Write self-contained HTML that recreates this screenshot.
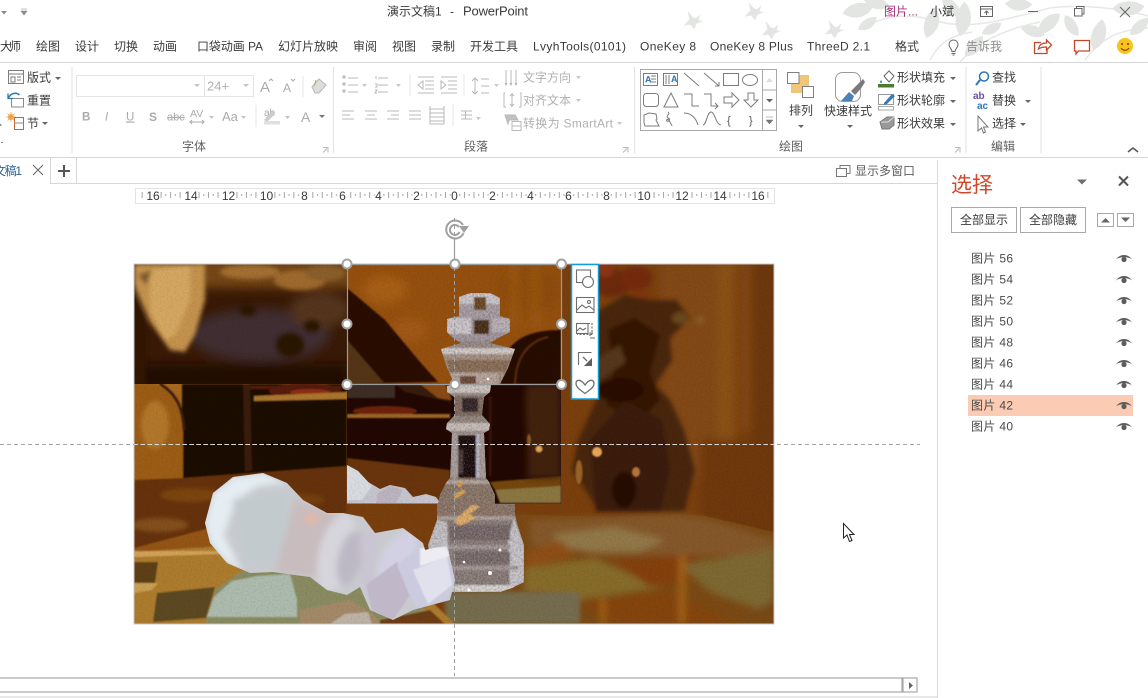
<!DOCTYPE html>
<html lang="zh"><head><meta charset="utf-8"><title>演示文稿1 - PowerPoint</title>
<style>
html,body{margin:0;padding:0;background:#fff;width:1148px;height:698px;overflow:hidden}
svg{display:block;position:absolute;left:0;top:0}
text{font-family:"Liberation Sans","Noto Sans CJK SC",sans-serif;font-size:12px;fill:#3a3a3a}
.d{fill:#b0b0b0}
.m{fill:#5e5e5e}
.l{fill:#4a4a4a;font-size:12px}
.ic{fill:none;stroke:#7c7c7c;stroke-width:1}
.dis{fill:none;stroke:#b8b8b8;stroke-width:1}
.leaf{fill:#e2e5e2}
.h{fill:#fff;stroke:#a2a2a2;stroke-width:2}
</style></head><body>
<svg width="1148" height="698" viewBox="0 0 1148 698" xmlns="http://www.w3.org/2000/svg">
<defs>
<filter id="b1" x="-20%" y="-20%" width="140%" height="140%"><feGaussianBlur stdDeviation=".8"/></filter>
<filter id="b2" x="-20%" y="-20%" width="140%" height="140%"><feGaussianBlur stdDeviation="2.2"/></filter>
<filter id="b3" x="-20%" y="-20%" width="140%" height="140%"><feGaussianBlur stdDeviation="3.5"/></filter>
<filter id="b5" x="-30%" y="-30%" width="160%" height="160%"><feGaussianBlur stdDeviation="5"/></filter>
<filter id="grain" x="0" y="0" width="100%" height="100%"><feTurbulence type="fractalNoise" baseFrequency=".55" numOctaves="2" seed="4"/><feColorMatrix type="matrix" values="0 0 0 0 0  0 0 0 0 0  0 0 0 0 0  1.6 0 0 0 -.62"/></filter>
<filter id="grainW" x="0" y="0" width="100%" height="100%"><feTurbulence type="fractalNoise" baseFrequency=".7" numOctaves="2" seed="9"/><feColorMatrix type="matrix" values="0 0 0 0 1  0 0 0 0 1  0 0 0 0 1  2.6 0 0 0 -1.2"/></filter>
<clipPath id="cp"><rect x="134" y="264" width="640" height="360"/></clipPath>
<clipPath id="ctl"><rect x="134" y="264" width="213" height="120"/></clipPath>
<clipPath id="ctm"><rect x="347" y="264" width="214" height="120"/></clipPath>
<clipPath id="cpt"><rect x="347" y="384" width="214" height="119.5"/></clipPath>
<clipPath id="cr"><rect x="561" y="264" width="213" height="360"/></clipPath>
<clipPath id="cb"><rect x="134" y="384" width="640" height="240"/></clipPath>
<clipPath id="gk"><path d="M459 297L470 293L490 293L500 298L500 316L510 319L510 332L498 338L490 343L515 349L508 368L500 384L491 385L490 392L484 397L482 415L490 424L489 430L484 433L486 478L489 482L495 495L495 504L515 504L515 515L519 530L524 545L524 582L512 588L500 592L445 592L432 570L428 545L437 520L437 504L438 504L440 495L446 483L450 478L452 433L446 429L447 423L455 415L454 397L447 392L447 386L454 384L446 365L441 349L461 343L452 337L447 332L447 319L459 316Z"/></clipPath>
<clipPath id="wkc"><path d="M205 523L213 493L233 477L263 473L287 483L303 500L327 513L343 513L363 517L375 533L403 528L423 543L425 550L447 545L455 580L450 600L413 610L393 620L370 610L360 587L347 595L327 590L310 577L273 572L250 573L227 563L210 543Z"/></clipPath>
<linearGradient id="am" x1="0" y1="0" x2="0" y2="1"><stop offset="0" stop-color="#a9691f"/><stop offset="1" stop-color="#8a4c10"/></linearGradient>
<pattern id="tick" x="454.5" y="192" width="9.48" height="7" patternUnits="userSpaceOnUse"><rect x="0" y="0" width="1" height="6" fill="#a4a4a4"/><rect x="4.74" y="2" width="1" height="2" fill="#a4a4a4"/></pattern>
<symbol id="eye" viewBox="0 0 16 10" overflow="visible"><path d="M0 6.500C4 .5 12 .5 16 6.500C12 3.400 4 3.400 0 6.500Z" fill="#5c5c5c"/><circle cx="8" cy="6.500" r="2.600" fill="#5c5c5c"/></symbol>
<symbol id="bird" viewBox="-12 -12 24 24" overflow="visible"><path d="M-10 5L-4 -2L-6 -11L0 -4L3 -3L8 -7L6 -1L11 0L4 3L1 9L-3 4Z"/></symbol>
<symbol id="lf" viewBox="-12 -12 24 24" overflow="visible"><path d="M-12 1C-7 -7 3 -9 12 -5C9 3 -2 8 -12 1Z"/></symbol>
</defs>

<rect width="1148" height="698" fill="#fff"/>

<!-- title bar decoration -->
<g class="leaf">
<path d="M862 30C885 12 915 14 940 22C975 30 1010 18 1050 8C1080 4 1120 8 1148 16" fill="none" stroke="#e6e8e6" stroke-width="1.500"/>
<path d="M960 62C975 45 1000 30 1040 22M1085 60C1100 40 1115 30 1148 28M930 60C940 42 950 36 972 32" fill="none" stroke="#e6e8e6" stroke-width="1.500"/>
<use href="#bird" x="682" y="10" width="22" height="22"/>
<use href="#bird" x="743" y="1" width="22" height="22"/>
<use href="#bird" x="760" y="20" width="22" height="22"/>
<use href="#bird" x="823" y="19" width="22" height="22"/>
<use href="#lf" transform="translate(858 12) scale(1.300)" width="24" height="24" x="-12" y="-12"/>
<use href="#lf" transform="translate(875 4) rotate(30) scale(1.100)" width="24" height="24" x="-12" y="-12"/>
<use href="#lf" transform="translate(868 25) rotate(-20) scale(.9)" width="24" height="24" x="-12" y="-12"/>
<use href="#lf" transform="translate(933 24) rotate(-60) scale(1.300)" width="24" height="24" x="-12" y="-12"/>
<use href="#lf" transform="translate(950 8) rotate(60) scale(1.100)" width="24" height="24" x="-12" y="-12"/>
<use href="#lf" transform="translate(965 20) rotate(-70) scale(1.400)" width="24" height="24" x="-12" y="-12"/>
<use href="#lf" transform="translate(975 48) rotate(-35) scale(1.100)" width="24" height="24" x="-12" y="-12"/>
<use href="#lf" transform="translate(992 30) rotate(-15) scale(.9)" width="24" height="24" x="-12" y="-12"/>
<use href="#lf" transform="translate(1018 6) rotate(15) scale(1.100)" width="24" height="24" x="-12" y="-12"/>
<use href="#lf" transform="translate(1034 30) rotate(-150) scale(1)" width="24" height="24" x="-12" y="-12"/>
<use href="#lf" transform="translate(1048 22) rotate(150) scale(1.200)" width="24" height="24" x="-12" y="-12"/>
<use href="#lf" transform="translate(1070 26) rotate(70) scale(1)" width="24" height="24" x="-12" y="-12"/>
<use href="#lf" transform="translate(1100 36) rotate(-60) scale(1.300)" width="24" height="24" x="-12" y="-12"/>
<use href="#lf" transform="translate(1128 10) rotate(10) scale(1.300)" width="24" height="24" x="-12" y="-12"/>
<use href="#lf" transform="translate(1140 28) rotate(-30) scale(1)" width="24" height="24" x="-12" y="-12"/>
</g>

<!-- QAT + title -->
<path d="M1 11h6l-3 3.500z" fill="#8a8a8a"/>
<path d="M21 9h6M21 11h6l-3 4z" fill="#8a8a8a" stroke="#8a8a8a" stroke-width=".6"/>
<text x="387" y="15.500">演示文稿1</text><text x="450" y="15.500">-</text><text x="463" y="15.500" style="font-size:13px" textLength="65">PowerPoint</text>
<text x="884" y="15.500" style="fill:#a6307c">图片...</text>
<text x="930" y="15.500">小斌</text>
<g fill="none" stroke="#666"><rect x="980.500" y="6.500" width="12" height="10"/><path d="M980.500 9h12M986.500 15v-4M984.500 13l2-2 2 2"/><path d="M1028 11.500h10"/><rect x="1074.500" y="8.500" width="7.500" height="7.500"/><path d="M1076.500 8.500v-2h7.500v7.500h-2"/><path d="M1120 7l10 10M1130 7l-10 10"/></g>

<!-- tabs -->
<g>
<text x="0" y="50.500" textLength="21">大师</text><text x="36" y="50.500">绘图</text><text x="75" y="50.500">设计</text><text x="114" y="50.500">切换</text><text x="153" y="50.500">动画</text>
<text x="197" y="50.500" textLength="66">口袋动画 PA</text><text x="278" y="50.500">幻灯片放映</text><text x="353" y="50.500">审阅</text><text x="392" y="50.500">视图</text><text x="431" y="50.500">录制</text><text x="470" y="50.500">开发工具</text>
<text x="533" y="50.500" textLength="93">LvyhTools(0101)</text><text x="640" y="50.500" textLength="56">OneKey 8</text><text x="710" y="50.500" textLength="83">OneKey 8 Plus</text><text x="807" y="50.500" textLength="63">ThreeD 2.1</text>
<text x="895" y="50.500">格式</text><text x="966" y="50.500" style="fill:#8f8f8f">告诉我</text>
</g>
<g fill="none" stroke="#666"><path d="M952 51.500c0-3-3-3.500-3-7a4.500 4.500 0 019 0c0 3.500-3 4-3 7zM951.500 53.500h4M952.500 55h2"/></g>
<g fill="none" stroke="#c0492b" stroke-width="1.300"><path d="M1041 42.500h-6.500v11h12.500v-4M1038.500 49c1-5 4-6 8-6v-3l5 5-5 5v-3c-3 0-6 .5-8 2z"/><path d="M1074.500 40.500h15v10.500h-11l-2.500 3v-3h-1.500z"/></g>
<circle cx="1125" cy="46" r="8" fill="#fcc21a"/><circle cx="1122" cy="44" r="1" fill="#5a4300"/><circle cx="1128" cy="44" r="1" fill="#5a4300"/><path d="M1121 48c2 3 6 3 8 0" fill="none" stroke="#5a4300"/>

<!-- ribbon lines -->
<path d="M0 62.500H1148M0 157.500H1148" stroke="#d6d6d6" fill="none"/>
<path d="M72 67v86M333.500 67v86M634.500 67v86M966 67v86M1041 67v86" stroke="#e2e2e2" fill="none"/>
<path d="M1 142.500h2" stroke="#888"/>

<!-- slides group -->
<g fill="none" stroke="#7e7e7e"><rect x="8.500" y="70.500" width="15" height="13"/><path d="M8.500 74h15M11 77h4v5h-4zM17 77h4M17 80h4"/></g>
<text x="27" y="81.500">版式</text><path d="M55 77h6l-3 3z" fill="#666"/>
<g fill="none"><rect x="11.500" y="98.500" width="12" height="8.500" stroke="#888"/><path d="M8.500 98c2-5 8-6 11-3" stroke="#2f74b5" stroke-width="1.500"/><path d="M8 93.500v5h5" stroke="#2f74b5" stroke-width="1.300"/></g>
<text x="27" y="104.500">重置</text>
<circle cx="11" cy="117" r="3" fill="#f1a54a"/><path d="M11 112v10M6 117h10M7.500 113.500l7 7M14.500 113.500l-7 7" stroke="#f1a54a" stroke-width=".8"/>
<rect x="14.500" y="117.500" width="9" height="12" fill="#fff" stroke="#c06a2c"/><path d="M14.500 123h9" stroke="#888"/><path d="M-1 123l3 2 -3 2z" fill="#888"/>
<text x="27" y="127.500">节</text><path d="M42 122h6l-3 3z" fill="#666"/>

<!-- font group -->
<rect x="76.500" y="75.500" width="177" height="21" fill="#fff" stroke="#e4e4e4"/><path d="M204.500 75.500v21" stroke="#e4e4e4"/>
<path d="M194 84h6l-3 3zM243 84h6l-3 3z" fill="#c4c4c4"/><text x="207" y="90.500" class="d" style="font-size:13px">24+</text>
<g><text x="260" y="92" style="font-size:15px;fill:#aaa">A</text><text x="283" y="92" style="font-size:12px;fill:#aaa">A</text></g>
<path d="M269 81l2-2 2 2M291 79l2 2 2-2" fill="none" stroke="#aaa"/>
<path d="M303 76v21" stroke="#e4e4e4"/>
<g class="dis"><path d="M312 87l7-8 7 6-7 8h-4z" fill="#ddd"/><path d="M316 80l-2 6" stroke="#b8a37a"/></g>
<g><text x="82" y="120.500" style="font-weight:bold;font-size:11.500px;fill:#aaa">B</text><text x="105" y="120.500" style="font-style:italic;font-size:11.500px;fill:#aaa">I</text><text x="126" y="120.500" style="font-size:11.500px;fill:#aaa;text-decoration:underline">U</text><text x="149" y="121" style="font-weight:bold;font-size:12px;fill:#aaa">S</text><text x="167" y="120.500" style="font-size:11px;fill:#aaa;text-decoration:line-through">abc</text><text x="190" y="117" style="font-size:10.500px;fill:#aaa">AV</text><text x="222" y="121" style="font-size:13px;fill:#aaa">Aa</text><text x="301" y="122" style="font-size:14px;fill:#aaa">A</text><text x="264" y="116" style="font-size:10px;fill:#aaa">ab</text></g>
<path d="M190 122h14M192 120l-2 2 2 2M202 120l2 2-2 2" stroke="#aaa" fill="none"/>
<path d="M209 116h5l-2.500 3zM241 116h5l-2.500 3zM285 116h5l-2.500 3z" fill="#c4c4c4"/><path d="M319 115h6l-3 3z" fill="#777"/>
<path d="M256 105v22" stroke="#e4e4e4"/>
<path d="M264 120l8-9 3 3-8 8z" fill="#ccc"/><rect x="264" y="121" width="16" height="3.500" fill="#e0e0e0"/>
<text x="182" y="150.500" class="m">字体</text>
<g class="dis"><path d="M323 147.500h5v5M323 152.500l4-4"/></g>

<!-- paragraph group -->
<g class="dis" stroke="#bbb">
<path d="M348 78h10M348 85h10M348 92h10M378 78h10M378 85h10M378 92h10"/>
<path d="M343 76h2v2h-2zM343 83h2v2h-2zM343 90h2v2h-2z" fill="#bbb"/>
<path d="M376 76v3M375 84h2v3h-2M375 90h2l-2 3h2"/>
<path d="M418 77h16M425 81h9M425 85h9M425 89h9M418 93h16M423 81l-5 4 5 4z M441 77h16M448 81h9M448 85h9M448 89h9M441 93h16M441 81l5 4-5 4z"/>
<path d="M410 74v22M464 74v22" stroke="#e4e4e4"/>
<path d="M475 78v16M472 81l3-3 3 3M472 91l3 3 3-3M481 79h8M481 86h8M481 93h8"/>
<path d="M342 111h12M342 115h8M342 119h12M365 111h12M367 115h8M365 119h12M387 111h12M391 115h8M387 119h12M409 111h12M409 115h12M409 119h12"/>
<path d="M430 109h14M430 113h14M430 117h14M430 121h14M430 124h14M430 106v18M444 106v18"/>
<path d="M461 111h11M461 115h11M461 119h11M465.500 111v8"/>
<path d="M453 104v22" stroke="#e4e4e4"/>
<path d="M506 70v14M511 70v14M516 70v14M505 83l1 2 1-2M510 83l1 2 1-2M515 83l1 2 1-2"/>
<path d="M505 93h-1v14h2M520 93h1v14h-2M512 93v14M510 96l2-2 2 2M510 104l2 2 2-2"/>
<path d="M512 121.500h9v9h-9zM512 126h9"/>
<path d="M505 115h10l3 5h-9l-1 4z" fill="#c0c0c0"/>
</g>
<path d="M362 84h5l-2.500 3zM396 84h5l-2.500 3zM494 84h5l-2.500 3zM476 117h5l-2.500 3zM576 76h5l-2.500 3zM576 99h5l-2.500 3zM617 122h5l-2.500 3z" fill="#c8c8c8"/>
<text x="523" y="81.500" class="d">文字方向</text><text x="523" y="104.500" class="d">对齐文本</text>
<text x="523" y="127.500" class="d" textLength="90">转换为 SmartArt</text>
<text x="464" y="150.500" class="m">段落</text>
<g class="dis"><path d="M623 147.500h5v5M623 152.500l4-4"/></g>

<!-- drawing gallery -->
<rect x="640.500" y="69.500" width="136" height="61" fill="#fff" stroke="#a8a8a8"/>
<path d="M762.500 69.500v61M762.500 90h14M762.500 110h14" stroke="#a8a8a8"/>
<path d="M766 82l3.500-4 3.500 4z" fill="#ddd"/><path d="M766 99h7l-3.500 3.500z" fill="#666"/><path d="M766 117h7M766 120h7l-3.500 4z" fill="#777" stroke="#777" stroke-width=".5"/>
<g class="ic">
<rect x="643.500" y="73.500" width="14" height="12"/><path d="M651 76h5M651 79h5M651 82h5"/>
<rect x="663.500" y="73.500" width="14" height="12"/><path d="M666 75v9M669 75v9"/>
<path d="M684 73l15 13M704 73l15 13M715 86h4v-4"/>
<rect x="723.500" y="73.500" width="15" height="12"/><ellipse cx="750" cy="80" rx="7.500" ry="5.500"/>
<rect x="643.500" y="93.500" width="15" height="13" rx="3"/><path d="M664 107l7-14 7 14z"/>
<path d="M684 94h8v12h7M704 94h7v12h7M715 103l3 3-3 3"/>
<path d="M724 97h8v-4l7 7-7 7v-4h-8zM748 93h6v7h4l-7 7-7-7h4z"/>
<path d="M644 115l5-2 7 1 1 5-1 1 3 6h-14l-1-3z"/><path d="M668 112c3 2-3 4 0 6 3 1 1 4-1 3-2-1 3-3 2-1 1 3 3 5 3 6"/>
<path d="M684 113c7 0 12 5 14 12M703 125c4-1 4-13 8-13s5 13 10 13"/>
</g>
<text x="645" y="82.500" style="font-size:9px;fill:#2f74b5;font-weight:bold">A</text><text x="671" y="82" style="font-size:9px;fill:#2f74b5;font-weight:bold">A</text>
<text x="727" y="124" style="font-size:11px;fill:#555">{</text><text x="749" y="124" style="font-size:11px;fill:#555">}</text>

<!-- arrange + quick -->
<rect x="791" y="75" width="18" height="18" fill="#f2c678"/>
<rect x="787.500" y="72.500" width="11.500" height="11" fill="#fff" stroke="#808080"/><rect x="802.500" y="86.500" width="11" height="11" fill="#fff" stroke="#808080"/>
<text x="789" y="114.500">排列</text><path d="M798 125h6l-3 3z" fill="#666"/>
<rect x="835.500" y="72.500" width="25" height="29" rx="7" fill="#fff" stroke="#9a9a9a"/>
<path d="M841 101l8-9 5 4-2 5z" fill="#4d82b8"/><path d="M851 91c4-4 9-9 12-12l2 3c-2 4-6 9-10 13z" fill="#7a7a7a"/>
<text x="824" y="115">快速样式</text><path d="M847 125h6l-3 3z" fill="#666"/>
<g>
<path d="M884 76l5-5 5 5-5 6z" fill="#fff" stroke="#666"/><path d="M881 80c-2 3 0 4 1 2z" fill="#2f74b5"/><rect x="878" y="84" width="16" height="3.500" fill="#4a7b2d"/>
<rect x="878.500" y="94.500" width="15" height="10" fill="none" stroke="#999"/><path d="M884 103l8-9 3 2-8 8-3 1z" fill="#3a78b5"/><rect x="878.500" y="106.500" width="15" height="3.500" fill="#fff" stroke="#aaa"/>
<path d="M880 122l7-5h7v8l-5 4h-7z" fill="#999" stroke="#777"/><path d="M881 122h7l6-5" fill="none" stroke="#ddd"/>
</g>
<text x="897" y="81.500">形状填充</text><text x="897" y="104.500">形状轮廓</text><text x="897" y="127.500">形状效果</text>
<path d="M950 77h6l-3 3zM950 100h6l-3 3zM950 123h6l-3 3z" fill="#666"/>
<text x="779" y="150.500" class="m">绘图</text>
<g class="dis"><path d="M955 147.500h5v5M955 152.500l4-4"/></g>

<!-- edit -->
<circle cx="984" cy="76.500" r="4.500" fill="#fff" stroke="#2f74b5" stroke-width="1.500"/><path d="M980 80l-4 5" stroke="#2f74b5" stroke-width="2"/>
<text x="992" y="81.500">查找</text>
<text x="973" y="99" style="font-size:10px;font-weight:bold;fill:#6f4ea5">ab</text><text x="977" y="109" style="font-size:10px;font-weight:bold;fill:#2f74b5">ac</text>
<text x="992" y="104.500">替换</text><path d="M1025 100h6l-3 3z" fill="#666"/>
<path d="M978 116v15l3.500-3 2 5 2-1-2-5h4.500z" fill="#fff" stroke="#777"/>
<text x="992" y="127.500">选择</text><path d="M1020 123h6l-3 3z" fill="#666"/>
<text x="991" y="150.500" class="m">编辑</text>
<path d="M1128 152l5-4 5 4" fill="none" stroke="#555" stroke-width="1.500"/>

<!-- doc tab strip -->
<path d="M50.500 158v25.500H76.500V158M76.500 183.500H937" stroke="#d6d6d6" fill="none"/>
<text x="-6" y="175" style="fill:#2c5f94" textLength="28">文稿1</text>
<path d="M33 165l10 10M43 165l-10 10" stroke="#666" fill="none"/>
<path d="M64 165v12M58 171h12" stroke="#555" stroke-width="2" fill="none"/>
<g fill="none" stroke="#777"><rect x="836.500" y="168.500" width="10" height="8" /><path d="M840 168.500v-3h10v8h-3"/></g>
<text x="855" y="175" class="m">显示多窗口</text>

<!-- ruler -->
<rect x="135.500" y="188.500" width="639" height="15" fill="#fff" stroke="#e2e2e2"/>
<rect x="140" y="192" width="630" height="7" fill="url(#tick)"/>
<g fill="#fff"><rect x="146" y="189" width="14" height="13"/><rect x="184" y="189" width="14" height="13"/><rect x="221.500" y="189" width="14" height="13"/><rect x="259.500" y="189" width="14" height="13"/><rect x="300.500" y="189" width="8" height="13"/><rect x="338.500" y="189" width="8" height="13"/><rect x="374.500" y="189" width="8" height="13"/><rect x="412.500" y="189" width="8" height="13"/><rect x="450.500" y="189" width="8" height="13"/><rect x="488.500" y="189" width="8" height="13"/><rect x="526.500" y="189" width="8" height="13"/><rect x="564.500" y="189" width="8" height="13"/><rect x="602.500" y="189" width="8" height="13"/><rect x="637" y="189" width="14" height="13"/><rect x="675" y="189" width="14" height="13"/><rect x="713" y="189" width="14" height="13"/><rect x="751" y="189" width="14" height="13"/></g>
<g>
<text x="153" y="200" text-anchor="middle">16</text><text x="191" y="200" text-anchor="middle">14</text><text x="228.500" y="200" text-anchor="middle">12</text><text x="266.500" y="200" text-anchor="middle">10</text><text x="304.500" y="200" text-anchor="middle">8</text><text x="342.500" y="200" text-anchor="middle">6</text><text x="378.500" y="200" text-anchor="middle">4</text><text x="416.500" y="200" text-anchor="middle">2</text><text x="454.500" y="200" text-anchor="middle">0</text><text x="492.500" y="200" text-anchor="middle">2</text><text x="530.500" y="200" text-anchor="middle">4</text><text x="568.500" y="200" text-anchor="middle">6</text><text x="606.500" y="200" text-anchor="middle">8</text><text x="644" y="200" text-anchor="middle">10</text><text x="682" y="200" text-anchor="middle">12</text><text x="720" y="200" text-anchor="middle">14</text><text x="758" y="200" text-anchor="middle">16</text>
</g>

<!-- PHOTO -->
<g clip-path="url(#cp)">
<rect x="134" y="264" width="640" height="360" fill="#7a3f0e"/>

<!-- right wall -->
<g clip-path="url(#cr)">
<g filter="url(#b5)">
<rect x="561" y="260" width="220" height="270" fill="#7a400f"/>
<rect x="660" y="260" width="60" height="220" fill="#834812"/>
<rect x="718" y="260" width="16" height="180" fill="#8c5217"/>
<rect x="742" y="260" width="8" height="170" fill="#844a13"/>
<rect x="752" y="260" width="30" height="280" fill="#6d370b"/>
<rect x="700" y="440" width="80" height="90" fill="#703809"/>
<rect x="585" y="268" width="10" height="60" fill="#875013"/>
</g>
<g filter="url(#b2)">
<ellipse cx="612" cy="283" rx="20" ry="14" fill="#6d2a0d"/><ellipse cx="636" cy="278" rx="16" ry="12" fill="#752a10"/>
<ellipse cx="605" cy="270" rx="9" ry="7" fill="#8a3512"/><ellipse cx="640" cy="295" rx="9" ry="6" fill="#7e3510"/>
<path d="M596 312L625 295L650 300L676 300L690 318L670 338L672 360L655 385L670 400L684 430L695 470L684 512L600 512L572 470L578 440L600 392L595 350Z" fill="#482508"/>
<path d="M608 330L635 318L660 335L650 372L660 400L640 420L606 405L614 370Z" fill="#341706"/>
<path d="M590 440L625 400L662 420L670 470L660 512L596 512Z" fill="#3a1c07"/>
<ellipse cx="620" cy="390" rx="24" ry="12" fill="#2a0e04"/>
<ellipse cx="624" cy="490" rx="12" ry="18" fill="#260c03"/>
<ellipse cx="680" cy="318" rx="8" ry="6" fill="#6a4a1c"/><ellipse cx="700" cy="320" rx="5" ry="4" fill="#8a5a22"/>
<path d="M595 360L620 345L626 362L600 380Z" fill="#55391a"/>
</g>
<g filter="url(#b1)"><ellipse cx="597" cy="452" rx="5" ry="5" fill="#e9a858"/><ellipse cx="636" cy="472" rx="4" ry="5" fill="#b8753a"/><ellipse cx="579" cy="472" rx="3.500" ry="12" fill="#9a6426"/></g>
</g>

<!-- lower row left -->
<g clip-path="url(#cb)">
<rect x="134" y="384" width="213" height="240" fill="url(#am)"/>
<g filter="url(#b1)">
<path d="M182 384H347V480H182Z" fill="#1f0702"/>
<path d="M134 384L155 384C175 395 182 405 183 430L183 478L134 488Z" fill="#9c5d18"/>
<path d="M160 384C178 395 183 410 184 430" stroke="#3a1a0a" stroke-width="3" fill="none"/>
<path d="M182 478L347 466L347 540L240 520L134 548L134 480Z" fill="#663107"/>
<path d="M243 384L250 384L252 470L245 472Z" fill="#3a1b09"/>
<rect x="250" y="386" width="97" height="3" fill="#561f08"/>
<ellipse cx="305" cy="391" rx="36" ry="8" fill="#561c07"/><ellipse cx="310" cy="392" rx="20" ry="3" fill="#8e2e18"/>
<path d="M254 396L347 392L347 399L254 401Z" fill="#ac762d"/>
</g>
<g filter="url(#b2)">
<ellipse cx="190" cy="495" rx="30" ry="7" fill="#7d450f"/><ellipse cx="160" cy="525" rx="28" ry="7" fill="#84501a"/><ellipse cx="290" cy="500" rx="35" ry="7" fill="#754010"/><ellipse cx="155" cy="425" rx="14" ry="24" fill="#b37729"/>
</g>
</g>

<!-- top-left block -->
<g clip-path="url(#ctl)">
<rect x="134" y="264" width="213" height="120" fill="#3a1a07"/>
<g filter="url(#b5)">
<rect x="195" y="258" width="160" height="30" fill="#764718"/>
<ellipse cx="260" cy="335" rx="70" ry="26" fill="#3f2f30"/>
<ellipse cx="320" cy="310" rx="30" ry="18" fill="#54351a"/>
<rect x="134" y="364" width="215" height="26" fill="#210902"/>
</g>
<g filter="url(#b2)">
<path d="M134 264H205L205 300L195 335L185 352L170 350L150 322L134 285Z" fill="#c4934e"/>
<path d="M150 270L190 266L190 300L175 335L165 340L150 310Z" fill="#d5a862"/>
<path d="M138 275L152 270L146 285Z" fill="#7d5a2c"/>
<path d="M134 288L146 322L146 384L134 384Z" fill="#321404"/>
<ellipse cx="250" cy="272" rx="30" ry="7" fill="#a46f30"/><ellipse cx="300" cy="280" rx="26" ry="10" fill="#a06a2e"/><ellipse cx="325" cy="273" rx="20" ry="8" fill="#8a5f2c"/>
<ellipse cx="290" cy="345" rx="14" ry="12" fill="#2c1206"/><ellipse cx="248" cy="310" rx="8" ry="6" fill="#2c1206"/><ellipse cx="312" cy="326" rx="8" ry="6" fill="#2c1206"/>
</g>
</g>

<!-- top-middle block -->
<g clip-path="url(#ctm)">
<rect x="347" y="264" width="214" height="120" fill="#95500f"/>
<g filter="url(#b5)"><ellipse cx="385" cy="290" rx="22" ry="14" fill="#a85e16"/><ellipse cx="410" cy="330" rx="18" ry="12" fill="#a35814"/><ellipse cx="530" cy="290" rx="30" ry="24" fill="#8c4c11"/><rect x="512" y="262" width="6" height="66" fill="#a05c16"/><rect x="532" y="262" width="6" height="66" fill="#a05c16"/></g>
<g filter="url(#b1)">
<path d="M347 288L385 320L420 362L438 382L347 384Z" fill="#2a0e03"/>
<path d="M347 340L385 384L347 384Z" fill="#553615"/>
<path d="M500 384L508 350C518 336 535 330 561 330V384Z" fill="#270b02"/>
<path d="M515 384C516 358 527 342 548 337" stroke="#5a2a0c" stroke-width="2" fill="none"/>
</g>
</g>

<!-- patch lower-middle -->
<g clip-path="url(#cpt)">
<rect x="347" y="384" width="214" height="120" fill="#220802"/>
<g filter="url(#b1)">
<rect x="347" y="385" width="48" height="13" fill="#3d2d28"/>
<path d="M395 384H452L450 402L405 392Z" fill="#381a07"/>
<path d="M420 384H445L452 400L438 398Z" fill="#8a4c12"/>
<ellipse cx="385" cy="411" rx="32" ry="5" fill="#6e2409"/>
<path d="M347 414H450V418H347Z" fill="#9c6628"/>
<rect x="489" y="396" width="2.500" height="80" fill="#391808"/>
<path d="M347 458L450 470L450 503H347Z" fill="#6a3409"/>
<path d="M494 487L561 484V503H500Z" fill="#8c7742"/>
<path d="M490 482L561 476V486L495 490Z" fill="#754611"/>
</g>
<path d="M527 384H561V478H527C530 440 522 410 527 384Z" fill="#43240a" filter="url(#b3)"/>
<ellipse cx="539" cy="449" rx="3.500" ry="3.500" fill="#e4a758" filter="url(#b1)"/>
<ellipse cx="529" cy="440" rx="2" ry="6" fill="#8a5a24" filter="url(#b1)"/>
<path d="M347 465L358 471L368 482L380 489L390 485L405 488L413 497L426 494L436 497L441 504H347Z" fill="#c7c6cf"/>
<path d="M347 465L358 471L372 486L362 500L347 500Z" fill="#d9dde2"/>
<path d="M378 493L390 486L403 490L396 503H376Z" fill="#bcb5c0"/>
</g>

<!-- table right -->
<g clip-path="url(#cb)">
<path d="M455 512L600 517L690 515L705 516L774 532V624H455Z" fill="#7b4a14"/>
<g filter="url(#b3)">
<path d="M530 520L680 514L710 520L774 540L774 555L600 555L530 545Z" fill="#85582a"/>
<path d="M555 534L615 527L665 540L640 552L590 552L555 545Z" fill="#927848"/>
<path d="M524 568L595 558L660 588L575 600L524 592Z" fill="#876c2c"/>
<path d="M612 560L690 555L728 574L650 587Z" fill="#84400e"/>
<path d="M575 603L665 590L735 624H625Z" fill="#854410"/>
<path d="M680 565L774 548V615L710 592Z" fill="#7e6730"/>
<path d="M735 624L774 600V624Z" fill="#784812"/>
<rect x="678" y="555" width="8" height="69" fill="#a05f16"/>
<rect x="600" y="598" width="6" height="26" fill="#a05f16"/>
<path d="M527 552L561 540L575 556L527 568Z" fill="#8f4f18"/>
</g>
<rect x="445" y="592" width="135" height="32" fill="#766d50" filter="url(#b2)"/>
</g>

<!-- table left, checkers -->
<g clip-path="url(#cb)" filter="url(#b1)">
<path d="M134 552L235 545L300 570L430 600L455 624H134Z" fill="#ad7b2e"/>
<path d="M134 551H222V554L134 557Z" fill="#d2a358"/>
<path d="M134 562H158L155 583H134Z" fill="#5f4119"/>
<path d="M157 593L215 587L206 618L153 622Z" fill="#5c4a22"/>
<path d="M134 583H158L152 590L134 593Z" fill="#caa052"/>
<path d="M205 624L215 590L240 572L290 565L420 600L430 624Z" fill="#8b8c62"/>
<path d="M207 617L214 597L232 581L258 576L290 574L297 600L297 617Z" fill="#adbcae"/>
<path d="M300 610L350 600L375 616L380 624H300Z" fill="#a48a68"/>
<path d="M330 624L345 614L368 612L372 624Z" fill="#c0b4a8"/>
<path d="M380 620L430 610L445 624H380Z" fill="#6e3e12"/>
</g>

<!-- glass king -->
<g clip-path="url(#gk)">
<rect x="425" y="290" width="105" height="305" fill="#988a86"/>
<g filter="url(#b1)">
<!-- crown -->
<rect x="459" y="293" width="41" height="24" fill="#a79ca2"/>
<rect x="447" y="317" width="63" height="24" fill="#a1969c"/>
<path d="M458 297L470 293H490L500 298V304H458Z" fill="#cbc6ca"/>
<rect x="474" y="297" width="12" height="13" fill="#6b4926"/>
<rect x="474" y="320" width="15" height="14" fill="#4a2d16"/>
<rect x="447" y="318" width="24" height="16" fill="#cdc6cc"/>
<rect x="492" y="318" width="18" height="14" fill="#b9b0b6"/>
<!-- collar -->
<path d="M441 349H515L508 368L500 385H455L446 365Z" fill="#a68f80"/>
<rect x="441" y="348" width="74" height="6" fill="#d2cac6"/>
<path d="M446 360H510L506 372H450Z" fill="#8a6d58"/>
<rect x="452" y="373" width="46" height="11" fill="#b7a49c"/>
<rect x="460" y="376" width="16" height="8" fill="#6c4a38"/>
<!-- neck -->
<rect x="446" y="385" width="45" height="8" fill="#cdc3bd"/>
<rect x="454" y="396" width="29" height="20" fill="#806a60"/>
<rect x="462" y="398" width="16" height="14" fill="#342526"/>
<rect x="445" y="423" width="46" height="8" fill="#c7bcb8"/>
<rect x="450" y="416" width="38" height="7" fill="#93857e"/>
<!-- stem -->
<rect x="451" y="433" width="36" height="46" fill="#a89c98"/>
<rect x="458" y="435" width="20" height="44" fill="#1f0f09"/>
<rect x="476" y="434" width="3" height="46" fill="#b9b9cc"/>
<rect x="458" y="450" width="5" height="24" fill="#4a3a38"/>
<!-- flare -->
<rect x="436" y="478" width="60" height="27" fill="#8a7668"/>
<rect x="444" y="480" width="46" height="4" fill="#b4a69e"/>
<path d="M453 495L462 490L456 484L464 480L460 488L466 492L456 499Z" fill="#d9a34e"/>
<!-- base -->
<rect x="428" y="504" width="100" height="90" fill="#8a7b78"/>
<rect x="436" y="504" width="82" height="14" fill="#8c7468"/>
<rect x="436" y="516" width="84" height="4" fill="#ad9f99"/>
<path d="M455 520L464 512L472 505L480 506L470 514L476 518L462 525L458 530Z" fill="#e0ad68"/>
<path d="M428 545L437 520L447 522L449 560L445 592L432 570Z" fill="#c4c0c4"/>
<path d="M514 518L524 545V582L510 590L508 540Z" fill="#c7c3c8"/>
<rect x="448" y="545" width="62" height="4" fill="#a59897"/>
<rect x="448" y="566" width="70" height="4" fill="#a59897"/>
<rect x="445" y="585" width="70" height="7" fill="#d6d2d2"/>
<rect x="450" y="525" width="60" height="15" fill="#776868"/>
<rect x="455" y="552" width="55" height="12" fill="#7a6c6c"/>
</g>
<rect x="425" y="290" width="105" height="305" filter="url(#grain)" opacity=".22"/>
<rect x="425" y="290" width="105" height="305" filter="url(#grainW)" opacity=".22"/>
</g>
<g fill="#fff"><circle cx="490" cy="573" r="2"/><circle cx="469" cy="590" r="1.500"/><circle cx="500" cy="550" r="1.500"/><circle cx="488" cy="379" r="1.300"/><circle cx="464" cy="562" r="1.300"/></g>

<!-- texture across scene -->
<rect x="134" y="264" width="640" height="360" filter="url(#grain)" opacity=".1"/>

<!-- fallen white king -->
<g clip-path="url(#wkc)">
<rect x="200" y="470" width="260" height="155" fill="#c8cace"/>
<g filter="url(#b3)">
<path d="M205 523L213 493L233 477L263 473L287 483L258 486L236 500L224 535L242 572L227 563L210 543Z" fill="#e4edf2"/>
<path d="M232 500L285 490L300 565L245 565Z" fill="#c3cace"/>
<path d="M295 500L342 516L322 578L275 572Z" fill="#c8bcbe"/>
<ellipse cx="312" cy="519" rx="7" ry="4" fill="#eab69d"/>
<ellipse cx="337" cy="553" rx="18" ry="40" transform="rotate(14 337 553)" fill="#d6d5dc"/>
<ellipse cx="350" cy="558" rx="12" ry="28" transform="rotate(14 350 558)" fill="#bdb9c4"/>
<path d="M360 530L378 532L372 600L362 590Z" fill="#cac5d2"/>
<ellipse cx="398" cy="556" rx="15" ry="30" transform="rotate(35 398 556)" fill="#d2d0e2"/>
</g>
<g filter="url(#b1)">
<path d="M366 585L397 562L410 595L393 620L372 610Z" fill="#c0b7c8"/>
<path d="M397 565L418 548L447 547L455 580L448 600L418 608L408 592Z" fill="#cbcbdf"/>
<path d="M413 570L447 557L452 585L428 604Z" fill="#e1e1ee"/>
<path d="M420 548L446 547L450 556L420 566Z" fill="#edecf3"/>
</g>
</g>
</g>
<rect x="134" y="264" width="640" height="360" fill="none" stroke="#c9c9c9"/>

<!-- guides -->
<path d="M0 444.500H920" stroke="#a4a4a4" stroke-dasharray="4 3"/>
<path d="M134 444.500H774" stroke="#d8d8d8" stroke-dasharray="4 3"/>
<path d="M454.500 218V676" stroke="#9e9e9e" stroke-dasharray="4 3"/>

<!-- selection -->
<path d="M347.500 264.500H561.500V384.500H347.500Z M454.500 238V264" fill="none" stroke="#9c9c9c" stroke-width="1.200"/>
<g fill="none" stroke="#a0a0a0" stroke-width="2"><path d="M463 225a9 9 0 10.5 8"/><path d="M459 227a5 5 0 10.5 5"/></g>
<path d="M459 226h10l-5 7z" fill="#a0a0a0"/>
<g class="h"><circle cx="347" cy="264" r="4.500"/><circle cx="455" cy="264" r="4.500"/><circle cx="561.500" cy="264" r="4.500"/><circle cx="347" cy="324" r="4.500"/><circle cx="561.500" cy="324" r="4.500"/><circle cx="347" cy="384.500" r="4.500"/><circle cx="455" cy="384.500" r="4.500"/><circle cx="561.500" cy="384.500" r="4.500"/></g>

<!-- mini toolbar -->
<rect x="571.500" y="264.500" width="27" height="134.500" fill="#fff" stroke="#119dd9" stroke-width="1.500"/>
<g fill="none" stroke="#6e6e6e" stroke-width="1.100">
<rect x="576.500" y="270" width="14" height="12.500"/><circle cx="588" cy="282" r="5.500" fill="#fff"/>
<rect x="576.500" y="297.500" width="17.500" height="15"/><path d="M577 310l5-5 4 3 3-2 5 4"/><circle cx="589" cy="302" r="1.500"/>
<rect x="576.500" y="323.500" width="11.500" height="10"/><path d="M577 331l3-3 3 2 3-2" /><path d="M588 323.500h4v11M592 334.500h-15" stroke-dasharray="2 1.500"/><path d="M590 336v-3h3M590 338h5" />
<path d="M591.500 352.500h-13v12.500"/>
<path d="M583 357l4 4" stroke-width="1.300"/>
<path d="M585 385c-4-6 -9-6-9 -1.500c0 4 5 7 9 10c4-3 9-6 9-10c0-4.500-5-4.500-9 1.500z" stroke-width="1.300"/>
</g>
<path d="M592 358v8h-8z" fill="#5f5f5f"/>

<!-- scrollbar -->
<rect x="-2" y="678" width="904" height="14" fill="#fff" stroke="#a6a6a6" stroke-width="1.200"/>
<rect x="903" y="678" width="14" height="14" fill="#fff" stroke="#a6a6a6" stroke-width="1.200"/>
<path d="M909 682v7l4-3.500z" fill="#666"/>
<path d="M0 697H938" stroke="#d9d9d9" stroke-width="1.300"/>

<!-- cursor -->
<path d="M843.500 523.500V538L847 535L849.500 541.500L852 540.500L849.500 534.500L854 534.500Z" fill="#fff" stroke="#222"/>

<!-- right pane -->
<path d="M937.500 160V698" stroke="#d9d9d9"/>
<text x="951" y="192" style="font-size:21px;fill:#d24726">选择</text>
<path d="M1077 179.500h10l-5 5z" fill="#6f6f6f"/>
<path d="M1119 176.500l9 9M1128 176.500l-9 9" stroke="#555" stroke-width="2" fill="none"/>
<rect x="951.500" y="207.500" width="65" height="25" fill="#fff" stroke="#a8a8a8"/><rect x="1020.500" y="207.500" width="65" height="25" fill="#fff" stroke="#a8a8a8"/>
<text x="960" y="224">全部显示</text><text x="1029" y="224">全部隐藏</text>
<rect x="1097.500" y="213.500" width="16" height="13" fill="#fff" stroke="#a8a8a8"/><rect x="1117.500" y="213.500" width="16" height="13" fill="#fff" stroke="#a8a8a8"/>
<path d="M1101 222.500h9l-4.500-4.500zM1121 217.500h9l-4.500 4.500z" fill="#666"/>
<rect x="968" y="395" width="165" height="21" fill="#fbcbb4"/>
<g>
<text x="971" y="262.500" class="l" textLength="42">图片 56</text><text x="971" y="283.500" class="l" textLength="42">图片 54</text><text x="971" y="304.500" class="l" textLength="42">图片 52</text><text x="971" y="325.500" class="l" textLength="42">图片 50</text><text x="971" y="346.500" class="l" textLength="42">图片 48</text><text x="971" y="367.500" class="l" textLength="42">图片 46</text><text x="971" y="388.500" class="l" textLength="42">图片 44</text><text x="971" y="409.500" class="l" textLength="42">图片 42</text><text x="971" y="430.500" class="l" textLength="42">图片 40</text>
</g>
<use href="#eye" x="1116" y="253" width="16" height="10"/><use href="#eye" x="1116" y="274" width="16" height="10"/><use href="#eye" x="1116" y="295" width="16" height="10"/><use href="#eye" x="1116" y="316" width="16" height="10"/><use href="#eye" x="1116" y="337" width="16" height="10"/><use href="#eye" x="1116" y="358" width="16" height="10"/><use href="#eye" x="1116" y="379" width="16" height="10"/><use href="#eye" x="1116" y="400" width="16" height="10"/><use href="#eye" x="1116" y="421" width="16" height="10"/>
</svg>
</body></html>
